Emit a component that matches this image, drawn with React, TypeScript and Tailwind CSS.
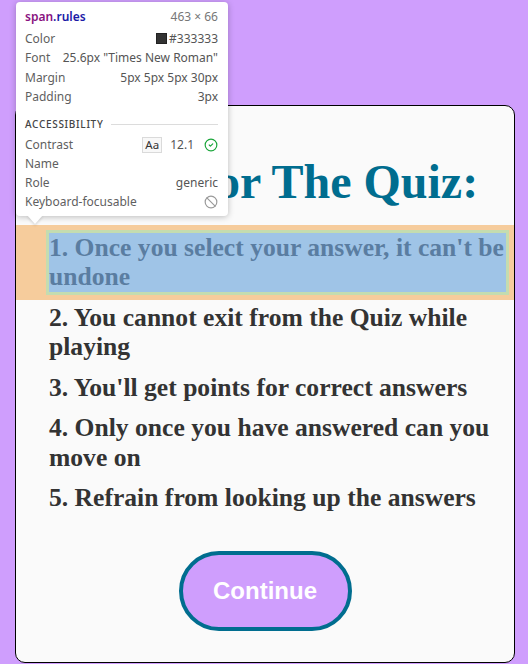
import React from 'react';
import { CircleCheck, Ban } from 'lucide-react';

const rules = [
  "1. Once you select your answer, it can't be undone",
  '2. You cannot exit from the Quiz while playing',
  "3. You'll get points for correct answers",
  '4. Only once you have answered can you move on',
  '5. Refrain from looking up the answers',
];

const serif = "font-['Liberation_Serif','Times_New_Roman',serif]";

function InspectTooltip() {
  const row = 'flex items-center justify-between h-[19.5px]';
  const row2 = 'flex items-center justify-between h-[19px]';
  return (
    <div className="absolute left-[16px] top-[2px] w-[212px] h-[214px] z-10 font-['Noto_Sans','Open_Sans',sans-serif] text-[12px] text-[#5f5f5f]">
      <div className="h-full rounded-[4px] bg-white shadow-[0_1px_6px_rgba(0,0,0,0.25)] pt-[5px] pl-[9px] pr-[10px]">
        <div className="flex items-center justify-between h-[19px]">
          <span className="font-semibold">
            <span className="text-[#881280]">span</span>
            <span className="text-[#1a1aa6]">.rules</span>
          </span>
          <span className="text-[#777]">463 × 66</span>
        </div>

        <div className="mt-[3px]">
          <div className={row}>
            <span>Color</span>
            <span className="flex items-center gap-[2px] text-[#555]">
              <span className="inline-block w-[11px] h-[11px] bg-[#333] border border-[#222]" />
              #333333
            </span>
          </div>
          <div className={row}>
            <span>Font</span>
            <span className="text-[#555]">25.6px "Times New Roman"</span>
          </div>
          <div className={row}>
            <span>Margin</span>
            <span className="text-[#555]">5px 5px 5px 30px</span>
          </div>
          <div className={row}>
            <span>Padding</span>
            <span className="text-[#555]">3px</span>
          </div>
        </div>

        <div className="mt-[9px] h-[16px] flex items-center gap-[8px]">
          <span className="text-[10px] tracking-[0.7px] font-medium text-[#444]">ACCESSIBILITY</span>
          <div className="flex-1 h-px bg-[#dcdcdc]" />
        </div>

        <div className="mt-[3px]">
          <div className={row2}>
            <span>Contrast</span>
            <span className="flex items-center text-[#555]">
              <span className="inline-flex items-center justify-center w-[20px] h-[16px] border border-[#dadada] bg-[#f8f8f8] text-[11.5px] text-[#333]">
                Aa
              </span>
              <span className="ml-[8px]">12.1</span>
              <CircleCheck className="ml-[10px] w-[14px] h-[14px] text-[#1aa53a]" strokeWidth={2} />
            </span>
          </div>
          <div className={row2}>
            <span>Name</span>
          </div>
          <div className={row2}>
            <span>Role</span>
            <span className="text-[#555]">generic</span>
          </div>
          <div className={row2}>
            <span>Keyboard-focusable</span>
            <Ban className="w-[14px] h-[14px] text-[#9a9a9a]" strokeWidth={2} />
          </div>
        </div>
      </div>
      {/* arrow */}
      <div className="absolute left-[11px] top-[213px] w-0 h-0 border-l-[8px] border-r-[8px] border-t-[9px] border-l-transparent border-r-transparent border-t-white drop-shadow-[0_2px_1px_rgba(0,0,0,0.12)]" />
    </div>
  );
}

export default function App() {
  return (
    <div className="relative w-full h-[664px] overflow-hidden bg-[#cf9efd]">
      <InspectTooltip />

      <div className="ml-[15px] mt-[105px] w-[500px] rounded-[10px] border border-black bg-[#fafafa] pt-[48px] pb-[31px]">
        <h1 className={`${serif} pl-[8px] text-center text-[48px] leading-[56px] font-bold text-[#006d8f]`}>
          Rules For The Quiz:
        </h1>

        <div className={`${serif} mt-[20px] flex flex-col gap-[5px] text-[25.6px] leading-[1.15] font-bold text-[#333333]`}>
          {rules.map((rule, i) =>
            i === 0 ? (
              <div key={i} className="-my-[5px] py-[5px] pl-[30px] pr-[5px] bg-[#f6cc9c]">
                <span className="block w-[463px] p-[3px] bg-[#c4dcb0]">
                  <span className="block bg-[#9fc4e7] text-[#5a7da1]">{rule}</span>
                </span>
              </div>
            ) : (
              <span key={i} className="block ml-[30px] w-[463px] p-[3px]">
                {rule}
              </span>
            )
          )}
        </div>

        <button className="mt-[36px] mx-auto flex items-center justify-center w-[173px] h-[80px] rounded-full border-4 border-[#006d8f] bg-[#cf9efd] text-white text-[24px] font-bold font-['Liberation_Sans',Arial,sans-serif]">
          Continue
        </button>
      </div>
    </div>
  );
}
